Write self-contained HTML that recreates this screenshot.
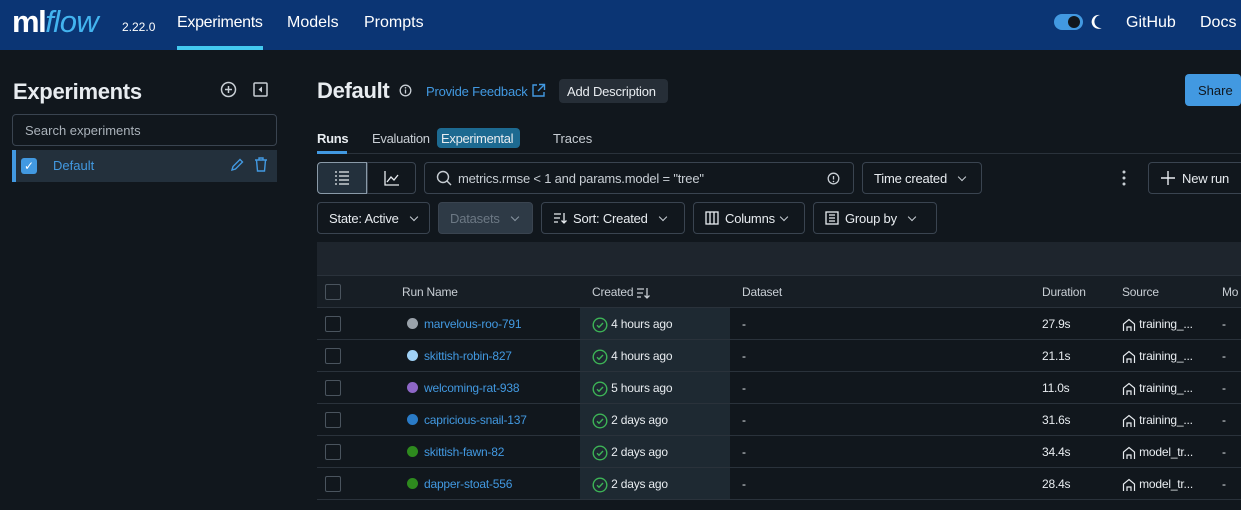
<!DOCTYPE html>
<html><head><style>
*{box-sizing:border-box;margin:0;padding:0}
body{width:1241px;height:510px;overflow:hidden;background:#11171d;font-family:"Liberation Sans",sans-serif;color:#e8ecf0;position:relative;font-size:13px}
.a{position:absolute}
.hdr{left:0;top:0;width:1241px;height:50px;background:#0b3574}
.btn{position:absolute;border:1px solid #3a4450;border-radius:4px;height:32px;display:flex;align-items:center;padding:0 11px;font-size:13px;color:#e8ecf0;gap:6px;letter-spacing:-0.2px}
.chev{width:6px;height:6px;border-right:1.2px solid #c8ced4;border-bottom:1.2px solid #c8ced4;transform:rotate(45deg);margin:-3px 0 0 6px}
.row{position:absolute;left:317px;width:924px;height:32px;border-bottom:1px solid #2a323b}
.cb{position:absolute;left:8px;top:8px;width:16px;height:16px;border:1px solid #4a545e;border-radius:2px}
.cell{position:absolute;top:0;height:32px;line-height:32px;font-size:12px;letter-spacing:-0.2px;white-space:nowrap}
.dot{display:inline-block;width:11px;height:11px;border-radius:50%;vertical-align:-1px;margin-right:6px;margin-left:5px}
svg{vertical-align:middle}
</style></head><body>
<div class="a hdr"></div>
<div class="a" style="left:12px;top:4px;font-size:31px;font-weight:bold;color:#fff;letter-spacing:-1.5px">ml<span style="color:#43b4ef;font-style:italic;font-weight:normal;letter-spacing:-0.5px">flow</span></div>
<div class="a" style="left:122px;top:20px;font-size:12px;color:#fff">2.22.0</div>
<div class="a" style="left:177px;top:14px;font-size:16px;color:#fff;letter-spacing:-0.3px">Experiments</div>
<div class="a" style="left:177px;top:46px;width:86px;height:4px;background:#43c9ef"></div>
<div class="a" style="left:287px;top:14px;font-size:16px;color:#fff">Models</div>
<div class="a" style="left:364px;top:14px;font-size:16px;color:#fff">Prompts</div>
<div class="a" style="left:1054px;top:14px;width:29px;height:16px;border-radius:8px;background:#4299e1"></div>
<div class="a" style="left:1068px;top:16px;width:12px;height:12px;border-radius:50%;background:#11171d"></div>
<svg class="a" style="left:1090px;top:14px" width="14" height="16" viewBox="0 0 14 16"><path d="M10 1A7 7 0 1 0 12 14A6 6 0 0 1 10 1Z" fill="#fff"/></svg>
<div class="a" style="left:1126px;top:14px;font-size:16px;color:#fff">GitHub</div>
<div class="a" style="left:1200px;top:14px;font-size:16px;color:#fff">Docs</div>

<div class="a" style="left:13px;top:79px;font-size:22px;font-weight:bold;letter-spacing:-0.3px">Experiments</div>
<svg class="a" style="left:220px;top:81px" width="17" height="17"><circle cx="8.5" cy="8.5" r="7" fill="none" stroke="#c8ced4" stroke-width="1.5"/><path d="M8.5 5v7M5 8.5h7" stroke="#c8ced4" stroke-width="1.5"/></svg>
<svg class="a" style="left:253px;top:82px" width="16" height="16"><rect x="1" y="1" width="13" height="13" fill="none" stroke="#c8ced4" stroke-width="1.5" rx="1"/><path d="M9 4.5v6L5.5 7.5z" fill="#c8ced4"/></svg>
<div class="a" style="left:12px;top:114px;width:265px;height:32px;border:1px solid #3a4450;border-radius:4px;padding:8px 12px;color:#aab2ba;font-size:13px">Search experiments</div>
<div class="a" style="left:12px;top:150px;width:265px;height:32px;background:#23303c;border-left:4px solid #4299e1"></div>
<div class="a" style="left:21px;top:158px;width:16px;height:16px;background:#4299e1;border-radius:3px;color:#fff;font-size:12px;text-align:center;line-height:16px">✓</div>
<div class="a" style="left:53px;top:158px;color:#4299e1;font-size:13px">Default</div>
<svg class="a" style="left:229px;top:157px" width="16" height="16"><path d="M3 13l1-3.5 7-7 2.5 2.5-7 7z" fill="none" stroke="#4299e1" stroke-width="1.4"/></svg>
<svg class="a" style="left:253px;top:156px" width="16" height="17"><path d="M2 4h12M6 4V2h4v2M3.5 4l1 11h7l1-11" fill="none" stroke="#4299e1" stroke-width="1.4"/></svg>

<div class="a" style="left:317px;top:78px;font-size:22px;font-weight:bold;letter-spacing:-0.3px">Default</div>
<svg class="a" style="left:399px;top:84px" width="13" height="13"><circle cx="6.5" cy="6.5" r="5.3" fill="none" stroke="#c8ced4" stroke-width="1.3"/><path d="M6.5 5.5v4" stroke="#c8ced4" stroke-width="1.3"/><circle cx="6.5" cy="3.8" r=".8" fill="#c8ced4"/></svg>
<div class="a" style="left:426px;top:84px;color:#4299e1;font-size:13px;letter-spacing:-0.2px">Provide Feedback</div>
<svg class="a" style="left:531px;top:83px" width="15" height="15"><path d="M6 2H2v11h11V9M8 1.5h5.5V7M13.5 1.5L7 8" fill="none" stroke="#4299e1" stroke-width="1.4"/></svg>
<div class="a" style="left:559px;top:79px;width:109px;height:24px;background:#262e37;border-radius:4px;font-size:13px;padding:5px 8px;letter-spacing:-0.2px">Add Description</div>
<div class="a" style="left:1185px;top:74px;width:56px;height:32px;background:#4299e1;border-radius:4px;color:#11171d;font-size:13px;padding:9px 13px">Share</div>

<div class="a" style="left:317px;top:153px;width:924px;height:1px;background:#2a323b"></div>
<div class="a" style="left:317px;top:131px;font-weight:bold;font-size:13px;letter-spacing:-0.3px">Runs</div>
<div class="a" style="left:317px;top:151px;width:30px;height:3px;background:#4299e1"></div>
<div class="a" style="left:372px;top:131px;color:#c8ced4;letter-spacing:-0.3px">Evaluation</div>
<div class="a" style="left:437px;top:128px;width:83px;height:20px;background:#1d6a91;border-radius:4px;padding:3px 4px;color:#e8ecf0;letter-spacing:-0.3px">Experimental</div>
<div class="a" style="left:553px;top:131px;color:#c8ced4">Traces</div>

<div class="a" style="left:317px;top:162px;width:50px;height:32px;border:1px solid #8a9aa8;border-radius:4px 0 0 4px;background:#23303c"></div>
<svg class="a" style="left:334px;top:170px" width="16" height="16"><path d="M1 2h2M5 2h10M1 6h2M5 6h10M1 10h2M5 10h10M1 14h2M5 14h10" stroke="#e8ecf0" stroke-width="1.3"/></svg>
<div class="a" style="left:367px;top:162px;width:49px;height:32px;border:1px solid #3a4450;border-radius:0 4px 4px 0"></div>
<svg class="a" style="left:384px;top:170px" width="16" height="16"><path d="M1 1v14h14M3 12l4-5 3 3 4-5" fill="none" stroke="#e8ecf0" stroke-width="1.3"/></svg>
<div class="btn" style="left:424px;top:162px;width:430px;color:#c8ced4"><svg width="16" height="16"><circle cx="7" cy="7" r="5.5" fill="none" stroke="#c8ced4" stroke-width="1.4"/><path d="M11 11l4 4" stroke="#c8ced4" stroke-width="1.4"/></svg>metrics.rmse &lt; 1 and params.model = "tree"<svg style="position:absolute;right:13px" width="13" height="13"><circle cx="6.5" cy="6.5" r="5.3" fill="none" stroke="#c8ced4" stroke-width="1.3"/><path d="M6.5 4v3.5" stroke="#c8ced4" stroke-width="1.3"/><circle cx="6.5" cy="9.5" r=".8" fill="#c8ced4"/></svg></div>
<div class="btn" style="left:862px;top:162px;width:120px">Time created <span class="chev"></span></div>
<svg class="a" style="left:1121px;top:170px" width="6" height="16"><circle cx="3" cy="2" r="1.5" fill="#c8ced4"/><circle cx="3" cy="8" r="1.5" fill="#c8ced4"/><circle cx="3" cy="14" r="1.5" fill="#c8ced4"/></svg>
<div class="btn" style="left:1148px;top:162px;width:100px"><svg width="16" height="16"><path d="M8 1v14M1 8h14" stroke="#e8ecf0" stroke-width="1.4"/></svg>New run</div>

<div class="btn" style="left:317px;top:202px;width:113px">State: Active <span class="chev"></span></div>
<div class="btn" style="left:438px;top:202px;width:95px;background:#2e3a46;color:#6c7884">Datasets <span class="chev" style="border-color:#8a96a2"></span></div>
<div class="btn" style="left:541px;top:202px;width:144px"><svg width="14" height="14"><path d="M1 3h7M1 7h6M1 11h4M11 2v10M8.5 9.5L11 12l2.5-2.5" fill="none" stroke="#e8ecf0" stroke-width="1.3"/></svg>Sort: Created <span class="chev"></span></div>
<div class="btn" style="left:693px;top:202px;width:112px"><svg width="14" height="14"><rect x="1" y="1" width="12" height="12" fill="none" stroke="#e8ecf0" stroke-width="1.3"/><path d="M5 1v12M9 1v12" stroke="#e8ecf0" stroke-width="1.3"/></svg>Columns<span class="chev" style="margin-left:0"></span></div>
<div class="btn" style="left:813px;top:202px;width:124px"><svg width="14" height="14"><rect x="1" y="1" width="12" height="12" fill="none" stroke="#e8ecf0" stroke-width="1.3"/><path d="M4 4h6M4 7h6M4 10h6" stroke="#e8ecf0" stroke-width="1.2"/></svg>Group by <span class="chev"></span></div>

<div class="a" style="left:317px;top:242px;width:924px;height:34px;background:#1e252d;border-bottom:1px solid #2a323b"></div>
<div class="a" style="left:580px;top:308px;width:150px;height:192px;background:#1e2932"></div>
<div class="row" style="top:276px;background:#171e25"><div class="cb"></div>
<div class="cell" style="left:85px;color:#c8ced4">Run Name</div><div class="cell" style="left:275px;color:#c8ced4">Created <svg width="14" height="14"><path d="M1 3h7M1 7h6M1 11h4M11 2v10M8.5 9.5L11 12l2.5-2.5" fill="none" stroke="#c8ced4" stroke-width="1.3"/></svg></div><div class="cell" style="left:425px;color:#c8ced4">Dataset</div><div class="cell" style="left:725px;color:#c8ced4">Duration</div><div class="cell" style="left:805px;color:#c8ced4">Source</div><div class="cell" style="left:905px;color:#c8ced4">Mo</div></div>

<div class="row" style="top:308px"><div class="cb"></div><div class="cell" style="left:85px;color:#4299e1"><span class="dot" style="background:#9aa2aa"></span>marvelous-roo-791</div><div class="cell" style="left:275px"><svg width="16" height="16"><circle cx="8" cy="8" r="6.8" fill="none" stroke="#3db356" stroke-width="1.4"/><path d="M5 8.2l2 2 4-4.2" fill="none" stroke="#3db356" stroke-width="1.4"/></svg> 4 hours ago</div><div class="cell" style="left:425px">-</div><div class="cell" style="left:725px">27.9s</div><div class="cell" style="left:805px"><svg width="14" height="14"><path d="M1.5 13V6L7 1.5 12.5 6v7M5 13V9h4v4" fill="none" stroke="#e8ecf0" stroke-width="1.2"/></svg> training_...</div><div class="cell" style="left:905px">-</div></div>
<div class="row" style="top:340px"><div class="cb"></div><div class="cell" style="left:85px;color:#4299e1"><span class="dot" style="background:#9fd0f5"></span>skittish-robin-827</div><div class="cell" style="left:275px"><svg width="16" height="16"><circle cx="8" cy="8" r="6.8" fill="none" stroke="#3db356" stroke-width="1.4"/><path d="M5 8.2l2 2 4-4.2" fill="none" stroke="#3db356" stroke-width="1.4"/></svg> 4 hours ago</div><div class="cell" style="left:425px">-</div><div class="cell" style="left:725px">21.1s</div><div class="cell" style="left:805px"><svg width="14" height="14"><path d="M1.5 13V6L7 1.5 12.5 6v7M5 13V9h4v4" fill="none" stroke="#e8ecf0" stroke-width="1.2"/></svg> training_...</div><div class="cell" style="left:905px">-</div></div>
<div class="row" style="top:372px"><div class="cb"></div><div class="cell" style="left:85px;color:#4299e1"><span class="dot" style="background:#8e67c7"></span>welcoming-rat-938</div><div class="cell" style="left:275px"><svg width="16" height="16"><circle cx="8" cy="8" r="6.8" fill="none" stroke="#3db356" stroke-width="1.4"/><path d="M5 8.2l2 2 4-4.2" fill="none" stroke="#3db356" stroke-width="1.4"/></svg> 5 hours ago</div><div class="cell" style="left:425px">-</div><div class="cell" style="left:725px">11.0s</div><div class="cell" style="left:805px"><svg width="14" height="14"><path d="M1.5 13V6L7 1.5 12.5 6v7M5 13V9h4v4" fill="none" stroke="#e8ecf0" stroke-width="1.2"/></svg> training_...</div><div class="cell" style="left:905px">-</div></div>
<div class="row" style="top:404px"><div class="cb"></div><div class="cell" style="left:85px;color:#4299e1"><span class="dot" style="background:#2a7bc7"></span>capricious-snail-137</div><div class="cell" style="left:275px"><svg width="16" height="16"><circle cx="8" cy="8" r="6.8" fill="none" stroke="#3db356" stroke-width="1.4"/><path d="M5 8.2l2 2 4-4.2" fill="none" stroke="#3db356" stroke-width="1.4"/></svg> 2 days ago</div><div class="cell" style="left:425px">-</div><div class="cell" style="left:725px">31.6s</div><div class="cell" style="left:805px"><svg width="14" height="14"><path d="M1.5 13V6L7 1.5 12.5 6v7M5 13V9h4v4" fill="none" stroke="#e8ecf0" stroke-width="1.2"/></svg> training_...</div><div class="cell" style="left:905px">-</div></div>
<div class="row" style="top:436px"><div class="cb"></div><div class="cell" style="left:85px;color:#4299e1"><span class="dot" style="background:#2e8a1e"></span>skittish-fawn-82</div><div class="cell" style="left:275px"><svg width="16" height="16"><circle cx="8" cy="8" r="6.8" fill="none" stroke="#3db356" stroke-width="1.4"/><path d="M5 8.2l2 2 4-4.2" fill="none" stroke="#3db356" stroke-width="1.4"/></svg> 2 days ago</div><div class="cell" style="left:425px">-</div><div class="cell" style="left:725px">34.4s</div><div class="cell" style="left:805px"><svg width="14" height="14"><path d="M1.5 13V6L7 1.5 12.5 6v7M5 13V9h4v4" fill="none" stroke="#e8ecf0" stroke-width="1.2"/></svg> model_tr...</div><div class="cell" style="left:905px">-</div></div>
<div class="row" style="top:468px"><div class="cb"></div><div class="cell" style="left:85px;color:#4299e1"><span class="dot" style="background:#2e8a1e"></span>dapper-stoat-556</div><div class="cell" style="left:275px"><svg width="16" height="16"><circle cx="8" cy="8" r="6.8" fill="none" stroke="#3db356" stroke-width="1.4"/><path d="M5 8.2l2 2 4-4.2" fill="none" stroke="#3db356" stroke-width="1.4"/></svg> 2 days ago</div><div class="cell" style="left:425px">-</div><div class="cell" style="left:725px">28.4s</div><div class="cell" style="left:805px"><svg width="14" height="14"><path d="M1.5 13V6L7 1.5 12.5 6v7M5 13V9h4v4" fill="none" stroke="#e8ecf0" stroke-width="1.2"/></svg> model_tr...</div><div class="cell" style="left:905px">-</div></div>
</body></html>
